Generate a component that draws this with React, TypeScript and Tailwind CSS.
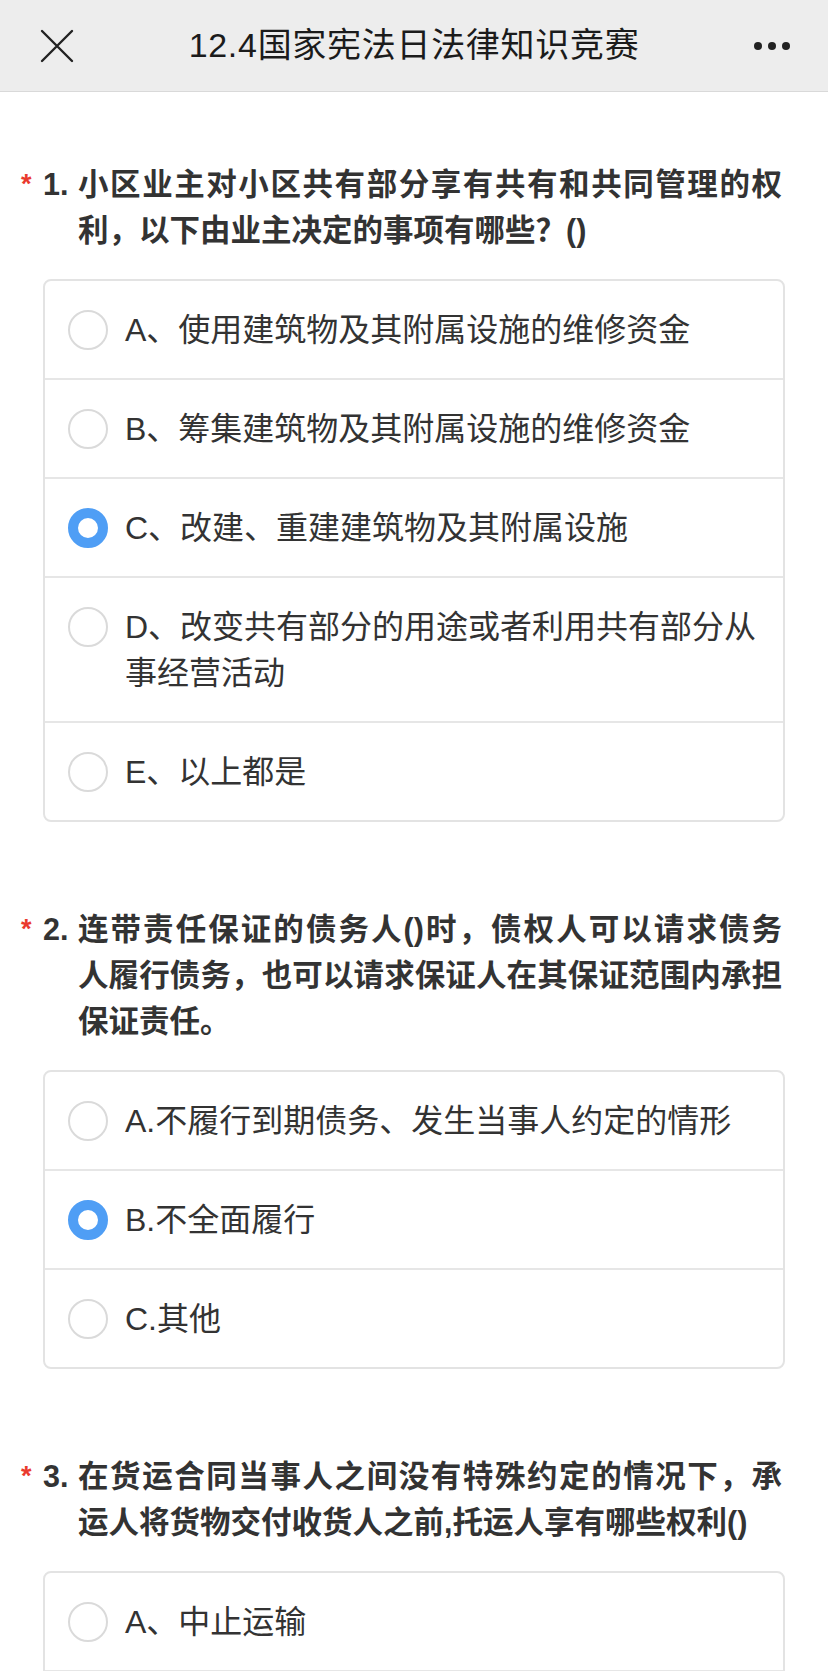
import React from "react";

type Q = {
  num: string;
  lines: string[];
  options: string[][];
  selected: number;
};

const questions: Q[] = [
  {
    num: "1.",
    lines: ["小区业主对小区共有部分享有共有和共同管理的权", "利，以下由业主决定的事项有哪些？()"],
    options: [
      ["A、使用建筑物及其附属设施的维修资金"],
      ["B、筹集建筑物及其附属设施的维修资金"],
      ["C、改建、重建建筑物及其附属设施"],
      ["D、改变共有部分的用途或者利用共有部分从", "事经营活动"],
      ["E、以上都是"],
    ],
    selected: 2,
  },
  {
    num: "2.",
    lines: [
      "连带责任保证的债务人()时，债权人可以请求债务",
      "人履行债务，也可以请求保证人在其保证范围内承担",
      "保证责任。",
    ],
    options: [["A.不履行到期债务、发生当事人约定的情形"], ["B.不全面履行"], ["C.其他"]],
    selected: 1,
  },
  {
    num: "3.",
    lines: ["在货运合同当事人之间没有特殊约定的情况下，承", "运人将货物交付收货人之前,托运人享有哪些权利()"],
    options: [["A、中止运输"], ["B、返还货物"], ["C、变更到达地"]],
    selected: -1,
  },
];

function Radio({ checked }: { checked: boolean }) {
  return checked ? (
    <span className="mt-[3px] box-border block h-[40px] w-[40px] shrink-0 rounded-full border-[10px] border-[#4f9ef5] bg-white" />
  ) : (
    <span className="mt-[3px] box-border block h-[40px] w-[40px] shrink-0 rounded-full border-2 border-[#dadada] bg-white" />
  );
}

function Question({ q, first }: { q: Q; first: boolean }) {
  return (
    <section className={first ? "px-[43px] pt-[69px]" : "px-[43px] pt-[84px]"}>
      <div className="relative flex text-[30.5px] font-bold leading-[46px] text-[#333333]">
        <span className="absolute left-[-22px] top-[10px] font-['Liberation_Sans',sans-serif] text-[27px] font-bold leading-none text-[#ea3a2e]">
          *
        </span>
        <span className="w-[35px] shrink-0">{q.num}</span>
        <div className="w-[704px]">
          {q.lines.map((l, i) =>
            i < q.lines.length - 1 ? (
              <div key={i} className="text-justify [text-align-last:justify]">
                {l}
              </div>
            ) : (
              <div key={i}>{l}</div>
            )
          )}
        </div>
      </div>
      <div className="mt-[26px] overflow-hidden rounded-[8px] border-2 border-[#e3e3e3] bg-white">
        {q.options.map((o, i) => (
          <div
            key={i}
            className={
              "flex items-start pb-[25.5px] pl-[23px] pr-[15px] pt-[25.5px]" +
              (i > 0 ? " border-t-2 border-[#e6e6e6]" : "")
            }
          >
            <Radio checked={i === q.selected} />
            <div className="ml-[17px] text-[32px] leading-[46px] text-[#333333]">
              {o.map((l, j) => (
                <div key={j}>{l}</div>
              ))}
            </div>
          </div>
        ))}
      </div>
    </section>
  );
}

export default function App() {
  return (
    <div className="min-h-screen w-[828px] bg-white font-['Liberation_Sans','Noto_Sans_CJK_SC',sans-serif]">
      <header className="grid h-[92px] grid-cols-[1fr_auto_1fr] items-center border-b border-[#d9d9d9] bg-[#ededed]">
        <div className="pl-[40px]">
          <svg width="34" height="34" viewBox="0 0 34 34" fill="none">
            <path d="M2 2 L32 32 M32 2 L2 32" stroke="#222" strokeWidth="2.4" strokeLinecap="round" />
          </svg>
        </div>
        <div className="text-[34px] tracking-[0.7px] text-[#1b1b1b]">12.4国家宪法日法律知识竞赛</div>
        <div className="flex justify-end gap-[6px] pr-[38px]">
          <span className="h-[8px] w-[8px] rounded-full bg-[#222]" />
          <span className="h-[8px] w-[8px] rounded-full bg-[#222]" />
          <span className="h-[8px] w-[8px] rounded-full bg-[#222]" />
        </div>
      </header>
      {questions.map((q, i) => (
        <Question key={i} q={q} first={i === 0} />
      ))}
      <div className="h-[60px]" />
    </div>
  );
}
